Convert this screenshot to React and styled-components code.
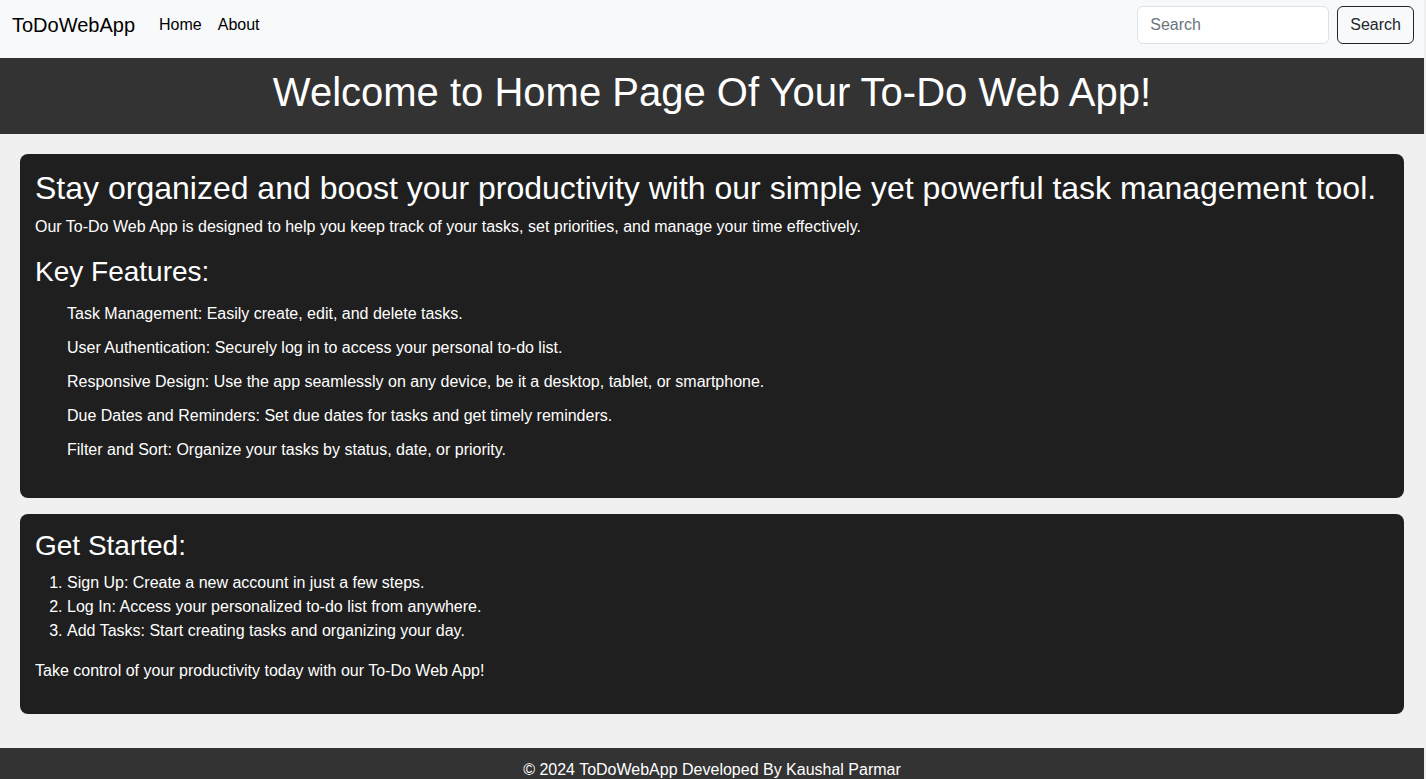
import styled, { createGlobalStyle } from "styled-components";

const GlobalStyle = createGlobalStyle`
  * {
    box-sizing: border-box;
  }
  html, body {
    margin: 0;
    padding: 0;
    background: #f0f0f0;
  }
  body {
    font-family: "Liberation Sans", Arial, Helvetica, sans-serif;
    font-size: 16px;
    line-height: 1.5;
    color: #212529;
  }
`;

const Page = styled.div`
  max-width: 1424px;
`;

const NavBar = styled.nav`
  display: flex;
  align-items: center;
  height: 58px;
  padding: 0 10px 8px 12px;
  background: #f8f9fa;
`;

const Brand = styled.a`
  font-size: 20px;
  line-height: 30px;
  padding: 5px 0;
  margin-right: 16px;
  color: #000;
  text-decoration: none;
`;

const NavLinks = styled.div`
  display: flex;
  flex: 1;
`;

const NavLink = styled.a`
  padding: 8px;
  color: #000;
  text-decoration: none;
  line-height: 24px;
`;

const SearchForm = styled.form`
  display: flex;
  gap: 8px;
`;

const SearchInput = styled.input`
  width: 192px;
  height: 38px;
  padding: 6px 12px;
  font: inherit;
  color: #212529;
  background: #fff;
  border: 1px solid #dee2e6;
  border-radius: 6px;
  outline: none;

  &::placeholder {
    color: #6c757d;
  }
`;

const SearchButton = styled.button`
  height: 38px;
  padding: 6px 12px;
  font: inherit;
  color: #212529;
  background: transparent;
  border: 1px solid #212529;
  border-radius: 6px;
`;

const Banner = styled.header`
  background: #333;
  color: #fff;
  text-align: center;
  padding: 4px 0 12px;

  h1 {
    margin: 0;
    font-size: 40px;
    font-weight: 400;
    line-height: 60px;
  }
`;

const Main = styled.main`
  padding: 20px 20px 34px;
`;

const Card = styled.section`
  background: #1f1f1f;
  color: #fff;
  border-radius: 8px;
  padding: 15px;
  margin-bottom: 16px;

  &:last-child {
    margin-bottom: 0;
  }

  h2,
  h3 {
    margin: 0 0 8px;
    font-weight: 400;
    line-height: 1.2;
  }
  h2 {
    font-size: 32px;
  }
  h3 {
    font-size: 28px;
  }
  p {
    margin: 0 0 16px;
  }
`;

const FeatureList = styled.ul`
  list-style: none;
  margin: 0 0 16px;
  padding-left: 32px;

  li {
    padding: 5px 0;
  }
`;

const StepList = styled.ol`
  margin: 0 0 16px;
  padding-left: 32px;
`;

const Footer = styled.footer`
  background: #333;
  color: #fff;
  text-align: center;
  padding: 10px 0;
`;

const features = [
  "Task Management: Easily create, edit, and delete tasks.",
  "User Authentication: Securely log in to access your personal to-do list.",
  "Responsive Design: Use the app seamlessly on any device, be it a desktop, tablet, or smartphone.",
  "Due Dates and Reminders: Set due dates for tasks and get timely reminders.",
  "Filter and Sort: Organize your tasks by status, date, or priority.",
];

const steps = [
  "Sign Up: Create a new account in just a few steps.",
  "Log In: Access your personalized to-do list from anywhere.",
  "Add Tasks: Start creating tasks and organizing your day.",
];

const App = () => {
  return (
    <>
      <GlobalStyle />
      <Page>
        <NavBar>
          <Brand href="#">ToDoWebApp</Brand>
          <NavLinks>
            <NavLink href="#">Home</NavLink>
            <NavLink href="#">About</NavLink>
          </NavLinks>
          <SearchForm onSubmit={(e) => e.preventDefault()}>
            <SearchInput type="search" placeholder="Search" />
            <SearchButton type="submit">Search</SearchButton>
          </SearchForm>
        </NavBar>
        <Banner>
          <h1>Welcome to Home Page Of Your To-Do Web App!</h1>
        </Banner>
        <Main>
          <Card>
            <h2>
              Stay organized and boost your productivity with our simple yet
              powerful task management tool.
            </h2>
            <p>
              Our To-Do Web App is designed to help you keep track of your
              tasks, set priorities, and manage your time effectively.
            </p>
            <h3>Key Features:</h3>
            <FeatureList>
              {features.map((f) => (
                <li key={f}>{f}</li>
              ))}
            </FeatureList>
          </Card>
          <Card>
            <h3>Get Started:</h3>
            <StepList>
              {steps.map((s) => (
                <li key={s}>{s}</li>
              ))}
            </StepList>
            <p>Take control of your productivity today with our To-Do Web App!</p>
          </Card>
        </Main>
        <Footer>© 2024 ToDoWebApp Developed By Kaushal Parmar</Footer>
      </Page>
    </>
  );
};

export default App;
